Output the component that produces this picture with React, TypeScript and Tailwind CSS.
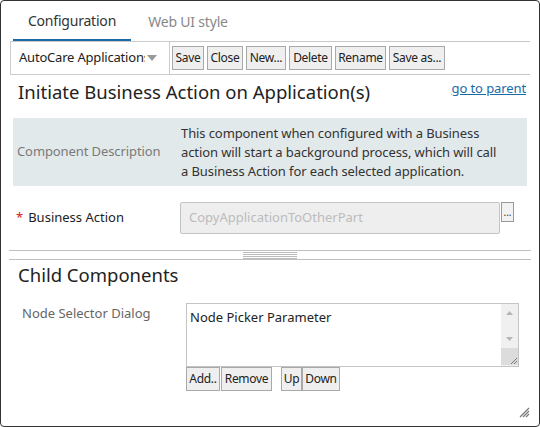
import React from "react";

const font = { fontFamily: '"Noto Sans", "Open Sans", sans-serif' };

function Btn({ children, className = "" }: { children: React.ReactNode; className?: string }) {
  return (
    <button
      className={
        "flex h-[24px] items-center justify-center whitespace-nowrap border border-[#a9a9a9] bg-[#efefef] px-0 text-[12px] tracking-[-0.3px] text-[#222] " +
        className
      }
    >
      {children}
    </button>
  );
}

export default function App() {
  return (
    <div className="w-[540px] h-[427px] bg-white" style={font}>
      <div className="relative box-border h-[427px] w-[540px] rounded-[4px] border border-[#333] overflow-hidden">
        {/* Tabs */}
        <div className="flex h-[41px] items-end pl-[12px]">
          <div className="flex h-[41px] w-[118px] items-center justify-center border-b-[3px] border-[#1a6aa8] text-[14px] tracking-[-0.2px] text-[#333]">
            Configuration
          </div>
          <div className="flex h-[41px] w-[114px] items-center justify-center text-[14px] tracking-[-0.2px] text-[#888]">
            Web UI style
          </div>
        </div>
        {/* toolbar */}
        <div className="mx-[9px] -mt-[1px] flex h-[34px] items-center border-y border-[#c8c8c8]">
          <div className="flex h-[34px] w-[160px] items-center border border-[#ccc] bg-white pl-[8px] pr-[6px]">
            <span className="w-[126px] overflow-hidden whitespace-nowrap text-[13px] tracking-[-0.2px] text-[#222]">AutoCare Applications</span>
            <svg width="10" height="6" viewBox="0 0 10 6" className="ml-[2px]">
              <path d="M0 0 L10 0 L5 6 Z" fill="#999" />
            </svg>
          </div>
          <div className="ml-[2px] flex gap-[3px]">
            <Btn className="w-[32px]">Save</Btn>
            <Btn className="w-[36px]">Close</Btn>
            <Btn className="w-[40px]">New...</Btn>
            <Btn className="w-[43px]">Delete</Btn>
            <Btn className="w-[51px]">Rename</Btn>
            <Btn className="w-[56px]">Save as...</Btn>
          </div>
        </div>
        {/* title */}
        <div className="flex items-start justify-between pl-[17px] pr-[13px] pt-[4px]">
          <div className="text-[18.5px] leading-[26px] text-[#222]">Initiate Business Action on Application(s)</div>
          <a className="text-[13px] leading-[18px] tracking-[-0.1px] text-[#1a6aa8] underline">go to parent</a>
        </div>
        {/* description */}
        <div className="mx-[12px] mt-[13px] flex h-[68px] items-center bg-[#e2e9eb]">
          <div className="w-[168px] pl-[4px] text-[13px] tracking-[-0.1px] text-[#7a7a7a]">Component Description</div>
          <div className="w-[322px] text-[13px] leading-[19px] tracking-[-0.1px] text-[#333]">
            This component when configured with a Business action will start a background process, which will call a
            Business Action for each selected application.
          </div>
        </div>
        {/* business action */}
        <div className="mt-[16px] flex items-start">
          <div className="flex h-[32px] w-[179px] items-center pl-[15px] text-[13px] text-[#222]">
            <span className="mr-[5px] text-[#cc2222]">*</span>Business Action
          </div>
          <div className="flex h-[32px] w-[320px] items-center rounded-[2px] border border-[#c4c4c4] bg-[#eeeeee] pl-[8px] text-[13px] text-[#bcbcbc]">
            CopyApplicationToOtherPart
          </div>
          <button className="ml-[1px] h-[20px] w-[13px] border border-[#999] bg-[#f2f2f2] text-[10px] leading-[12px] text-[#333]">
            ...
          </button>
        </div>
        {/* splitter */}
        <div className="relative mx-[8px] mt-[16px] h-[10px] border-y border-[#c0c0c0]">
          <div className="absolute left-[234px] top-[1px] flex w-[54px] flex-col gap-[1px]">
            <div className="h-[1px] bg-[#bbb]" />
            <div className="h-[1px] bg-[#bbb]" />
            <div className="h-[1px] bg-[#bbb]" />
            <div className="h-[1px] bg-[#bbb]" />
          </div>
        </div>
        {/* child components */}
        <div className="pl-[17px] pt-[2px] text-[18.5px] leading-[26px] text-[#222]">Child Components</div>
        <div className="mt-[15px] flex items-start">
          <div className="w-[185px] pl-[21px] text-[13px] leading-[20px] text-[#666]">Node Selector Dialog</div>
          <div className="flex flex-col">
            <div className="flex h-[64px] w-[333px] border border-[#c4c4c4] bg-white">
              <div className="flex-1 px-[3px] pt-[3px] text-[13px] leading-[20px] text-[#222]">Node Picker Parameter</div>
              <div className="flex w-[17px] flex-col items-center bg-[#f0f0f0]">
                <svg width="7" height="4" viewBox="0 0 7 4" className="mt-[7px]">
                  <path d="M0 4 L7 4 L3.5 0 Z" fill="#b5b5b5" />
                </svg>
                <svg width="7" height="4" viewBox="0 0 7 4" className="mt-[22px]">
                  <path d="M0 0 L7 0 L3.5 4 Z" fill="#b5b5b5" />
                </svg>
                <div className="mt-[7px] flex h-[17px] w-[17px] items-end justify-end bg-[#dcdcdc]">
                  <svg width="10" height="10" viewBox="0 0 10 10">
                    <path d="M9 3 L3 9 M9 6 L6 9" stroke="#777" strokeWidth="1" />
                  </svg>
                </div>
              </div>
            </div>
            <div className="flex">
              <Btn className="h-[22px] w-[34px]">Add..</Btn>
              <Btn className="ml-[1px] h-[22px] w-[51px]">Remove</Btn>
              <Btn className="ml-[9px] h-[22px] w-[21px]">Up</Btn>
              <Btn className="h-[22px] w-[38px]">Down</Btn>
            </div>
          </div>
        </div>
        {/* resize grip */}
        <svg width="12" height="12" viewBox="0 0 12 12" className="absolute bottom-[8px] right-[9px]">
          <path d="M11 2 L2 11 M11 5 L5 11 M11 8 L8 11" stroke="#777" strokeWidth="1.2" />
        </svg>
      </div>
    </div>
  );
}
